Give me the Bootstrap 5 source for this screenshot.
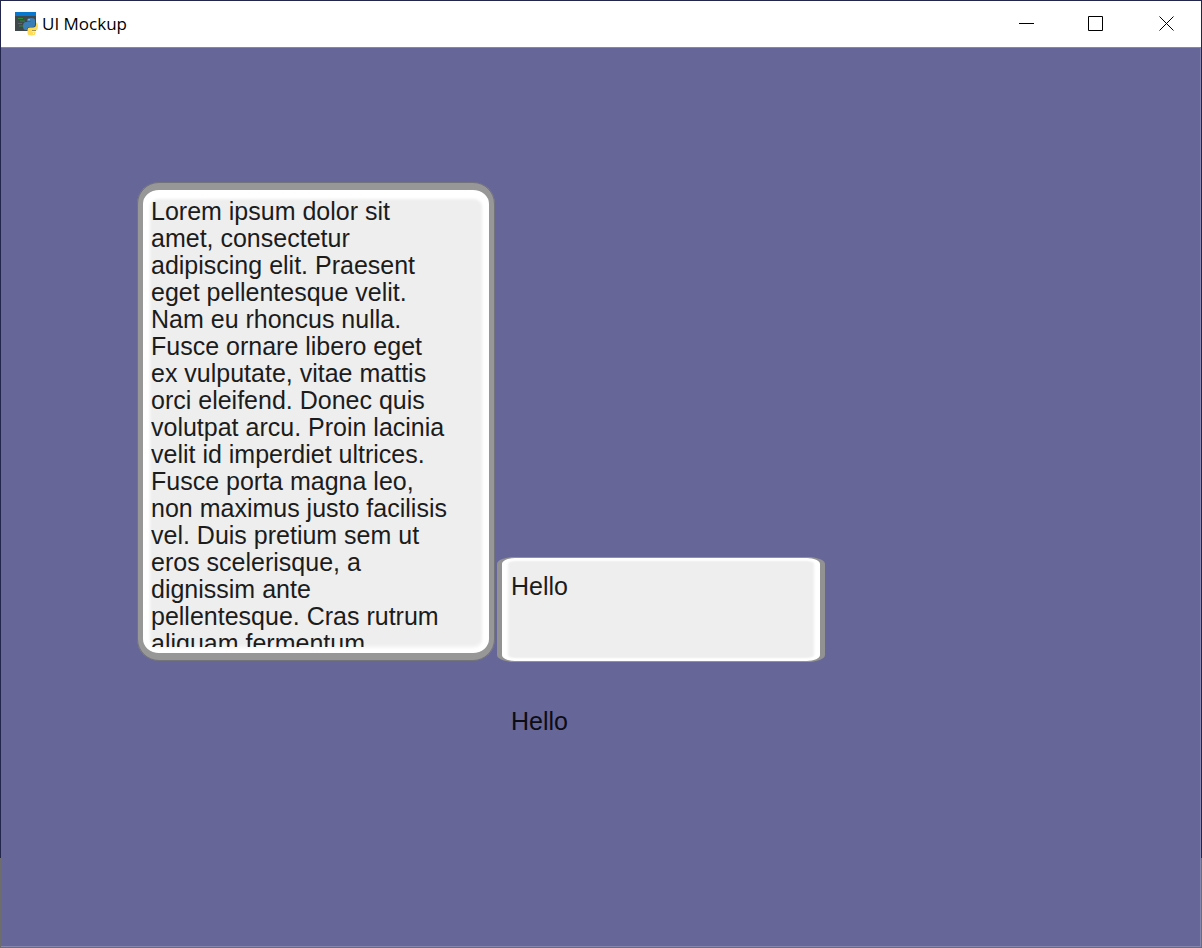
<!DOCTYPE html>
<html lang="en">
<head>
<meta charset="utf-8">
<meta name="viewport" content="width=device-width, initial-scale=1">
<title>UI Mockup</title>
<link href="https://cdn.jsdelivr.net/npm/bootstrap@5.3.0/dist/css/bootstrap.min.css" rel="stylesheet">
<style>
  body {
    background: linear-gradient(#22254c 0 858px, #6d6d6d 858px);
    font-family: "Liberation Sans", Arial, sans-serif;
    padding: 1px;
  }
  .titlebar { height: 46px; padding-left: 13px; }
  .title-text { font: 17px/24px "Open Sans", "Noto Sans", sans-serif; color: #000; }
  .win-btn { width: 70px; height: 46px; border: 0; background: none; padding: 0 0 2px; color: #000; }
  .win-btn:hover { background: #e5e5e5; }
  .stage {
    background: #666699;
    border: 1px solid #8585ad;
    border-left: 0;
    padding: 134px 16px 16px 136px;
  }
  .frame { background: #eee; overflow: hidden; }
  .frame-tall {
    width: 358px;
    height: 479px;
    border: solid #979797;
    border-width: 8px 6px 8px 6px;
    border-radius: 22px;
    outline: 1px solid rgba(70, 70, 90, .45);
    outline-offset: -1px;
    box-shadow: inset 0 0 4px 6px #fff, inset 0 3px 3px 6px #fff;
    padding: 8px 8px 6px;
  }
  .frame-short {
    width: 328px;
    height: 105px;
    border: solid #929292;
    border-width: 1px 5px;
    border-radius: 18px / 7px;
    box-shadow: inset 6px 0 3px #fff, inset -6px 0 3px #fff, inset 0 3px 2px #fff, inset 0 -3px 2px #fff;
    padding: 15px 9px 8px;
  }
  .text-field {
    width: 100%;
    height: 100%;
    border: 0;
    padding: 0;
    background: transparent;
    resize: none;
    overflow: hidden;
    outline: 0;
    white-space: pre;
  }
  .text-field, .plain-label { font-size: 25px; line-height: 27px; color: #1c1c1c; }
  .side { padding-top: 375px; margin-left: 2px; }
  .plain-label { margin: 46px 0 0 14px; color: #0c0c12; }
</style>
</head>
<body class="min-vh-100 d-flex flex-column">
<header class="titlebar bg-white d-flex align-items-center">
  <svg class="me-1" width="24" height="24" viewBox="0 0 24 24" aria-hidden="true">
    <path fill="#3f484b" d="M1 1h21v18H1z"/>
    <path fill="#0878cf" d="M1 0h21v4H1z"/>
    <path stroke="#2c8a3a" stroke-width="1.200" d="M4 6.500h5M6 9h5M4 11.500h4M5 14h5" fill="none"/>
    <path fill="#3b7eb5" d="M13 8q0-2 4-2t4 2v5q0 2-2.500 2h-3q-2.500 0-2.500 3h-1.500q-2.500 0-2.500-4t3-4h4.500V9.500H13z"/>
    <path fill="#ffdc58" d="M22 10.500q2 0 2 4t-2.500 4H18v1h3.500v1.500q0 2.500-4 2.500t-4-2.500V17.500q0-2 2.500-2h3q3 0 3-3z"/>
    <path fill="#fff" d="M14.500 7.300h1v1h-1zM19 20.800h1v1h-1z"/>
  </svg>
  <span class="title-text me-auto">UI Mockup</span>
  <button type="button" class="win-btn" aria-label="Minimize">
    <svg width="16" height="16" viewBox="0 0 16 16" stroke="currentColor" fill="none"><path d="M1 7.500h15"/></svg>
  </button>
  <button type="button" class="win-btn" aria-label="Maximize">
    <svg width="16" height="16" viewBox="0 0 16 16" stroke="currentColor" fill="none"><path d="M.5.5h14v14H.5z"/></svg>
  </button>
  <button type="button" class="win-btn" aria-label="Close">
    <svg width="16" height="16" viewBox="0 0 16 16" stroke="currentColor" fill="none"><path d="M1.500.5l14 14M15.500.5l-14 14"/></svg>
  </button>
</header>
<main class="stage flex-grow-1 d-flex align-items-start">
  <div class="frame frame-tall">
    <textarea class="text-field d-block" aria-label="Text area" spellcheck="false">Lorem ipsum dolor sit
amet, consectetur
adipiscing elit. Praesent
eget pellentesque velit.
Nam eu rhoncus nulla.
Fusce ornare libero eget
ex vulputate, vitae mattis
orci eleifend. Donec quis
volutpat arcu. Proin lacinia
velit id imperdiet ultrices.
Fusce porta magna leo,
non maximus justo facilisis
vel. Duis pretium sem ut
eros scelerisque, a
dignissim ante
pellentesque. Cras rutrum
aliquam fermentum</textarea>
  </div>
  <div class="side">
    <div class="frame frame-short">
      <textarea class="text-field d-block" aria-label="Message" spellcheck="false">Hello</textarea>
    </div>
    <p class="plain-label">Hello</p>
  </div>
</main>
<script src="https://cdn.jsdelivr.net/npm/bootstrap@5.3.0/dist/js/bootstrap.bundle.min.js"></script>
</body>
</html>
